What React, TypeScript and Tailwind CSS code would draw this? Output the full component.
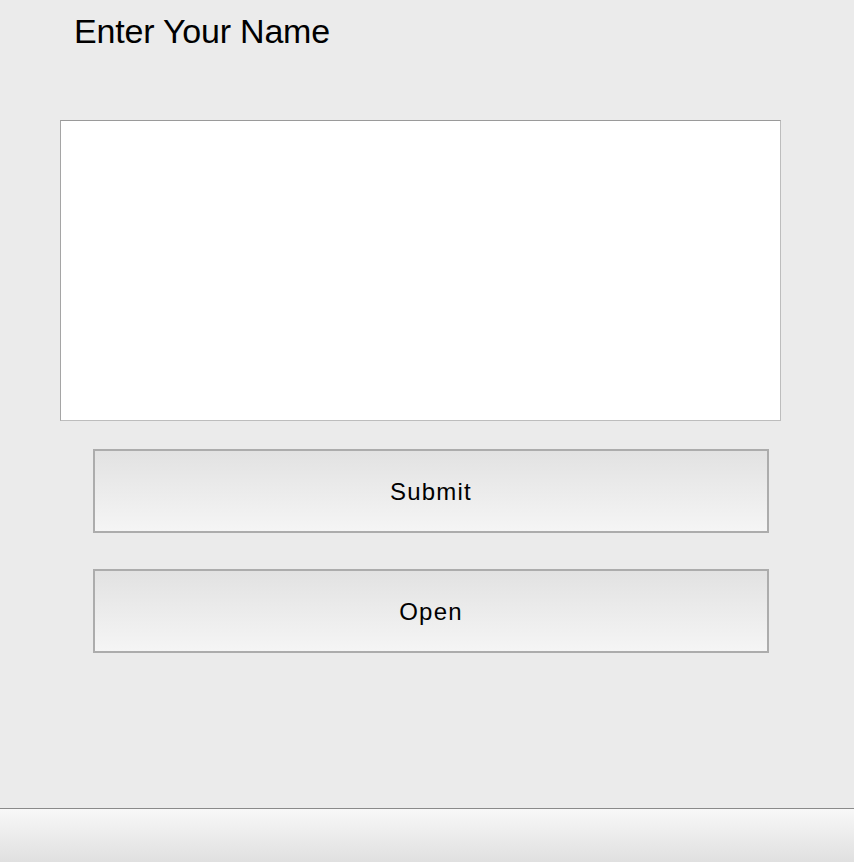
import React from "react";

export default function App() {
  return (
    <div className="w-[854px] h-[862px] bg-[#ebebeb] flex flex-col overflow-hidden" style={{ fontFamily: '"Liberation Sans", Arial, sans-serif' }}>
      <div className="flex-1 flex flex-col">
        <h1 className="pl-[74px] pt-[11px] text-[34px] leading-[40px] text-black tracking-[-0.2px]">Enter Your Name</h1>
        <div className="mt-[69px] ml-[60px] w-[721px] h-[301px] bg-white border border-t-[#9a9a9a] border-l-[#a5a5a5] border-r-[#bdbdbd] border-b-[#bdbdbd]" />
        <button className="mt-[28px] ml-[93px] w-[676px] h-[84px] pt-[2px] border-2 border-[#acacac] bg-gradient-to-b from-[#e2e2e2] to-[#f5f5f5] text-[24px] text-black tracking-[1.2px]">Submit</button>
        <button className="mt-[36px] ml-[93px] w-[676px] h-[84px] pt-[2px] border-2 border-[#acacac] bg-gradient-to-b from-[#e2e2e2] to-[#f5f5f5] text-[24px] text-black tracking-[1.2px]">Open</button>
      </div>
      <div className="h-[54px] border-t border-[#8a8a8a] bg-gradient-to-b from-[#f8f8f8] to-[#e0e0e0]" />
    </div>
  );
}
